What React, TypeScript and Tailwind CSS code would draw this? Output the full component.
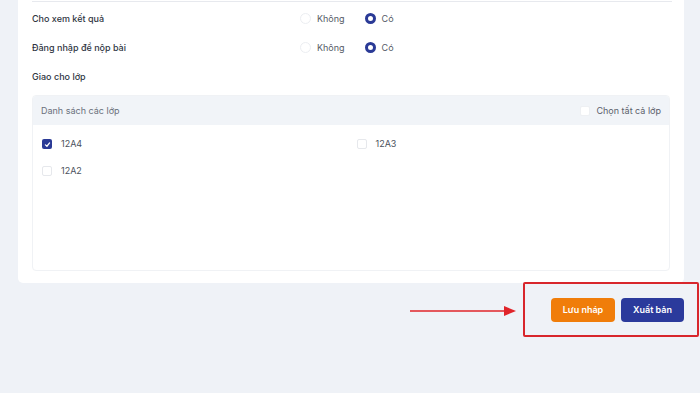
import React from "react";

function Radio({ checked, label }: { checked?: boolean; label: string }) {
  return (
    <label className="flex items-center gap-[6px]">
      {checked ? (
        <span className="w-[11px] h-[11px] rounded-full border-[3px] border-[#2a3a96] bg-white" />
      ) : (
        <span className="w-[11px] h-[11px] rounded-full border border-[#eceef2] bg-white" />
      )}
      <span className="text-[9px] text-[#555b66]">{label}</span>
    </label>
  );
}

function Check({ checked, label }: { checked?: boolean; label: string }) {
  return (
    <label className="flex items-center gap-[9px]">
      {checked ? (
        <span className="w-[10px] h-[10px] rounded-[2px] bg-[#2a3a96] flex items-center justify-center">
          <svg width="7" height="7" viewBox="0 0 10 10">
            <path d="M2 5.5 L4.2 7.5 L8 2.8" fill="none" stroke="white" strokeWidth="1.8" strokeLinecap="round" strokeLinejoin="round" />
          </svg>
        </span>
      ) : (
        <span className="w-[10px] h-[10px] rounded-[2px] border border-[#e6e8ec] bg-white" />
      )}
      <span className="text-[9px] text-[#4b515c]">{label}</span>
    </label>
  );
}

function OptionRow({ label }: { label: string }) {
  return (
    <div className="flex items-center h-[29px]">
      <span className="w-[266px] text-[9px] font-medium text-[#2f3542]">{label}</span>
      <div className="flex items-center gap-[20px] pl-[2px]">
        <Radio label="Không" />
        <Radio checked label="Có" />
      </div>
    </div>
  );
}

export default function App() {
  return (
    <div
      className="w-[700px] h-[393px] bg-[#eff2f7] overflow-hidden relative"
      style={{ fontFamily: "Inter, 'Noto Sans', sans-serif" }}
    >
      <div className="ml-[18px] w-[666px] h-[283px] bg-white rounded-b-[5px] px-[14px]">
        <div className="h-[2px] border-b border-[#e7e9ee] -mr-[2px]" />
        <div className="pt-[2px]">
          <OptionRow label="Cho xem kết quả" />
          <OptionRow label="Đăng nhập để nộp bài" />
          <div className="h-[30px] flex items-center text-[9px] font-medium text-[#2f3542]">Giao cho lớp</div>
        </div>
        <div className="mt-[3px] w-[638px] h-[176px] border border-[#f0f2f5] rounded-[4px] overflow-hidden">
          <div className="h-[29px] bg-[#f1f4f8] flex items-center justify-between pl-[8px] pr-[8px]">
            <span className="text-[9px] text-[#6b717c]">Danh sách các lớp</span>
            <label className="flex items-center gap-[6px]">
              <span className="w-[10px] h-[10px] rounded-[2px] bg-white border border-[#eef0f3]" />
              <span className="text-[9px] text-[#5b616b]">Chọn tất cả lớp</span>
            </label>
          </div>
          <div className="grid grid-cols-2 pl-[9px] pt-[10px] gap-y-[9px]">
            <div className="h-[18px] flex items-center"><Check checked label="12A4" /></div>
            <div className="h-[18px] flex items-center pl-[1px]"><Check label="12A3" /></div>
            <div className="h-[18px] flex items-center"><Check label="12A2" /></div>
          </div>
        </div>
      </div>

      <div className="absolute left-[410px] top-[304px]">
        <svg width="110" height="14" viewBox="0 0 110 14">
          <line x1="0" y1="7" x2="96" y2="7" stroke="#e0242a" strokeWidth="1.6" />
          <path d="M94 2 L106 7 L94 12 Z" fill="#e0242a" />
        </svg>
      </div>

      <div className="absolute left-[523px] top-[282px] w-[176px] h-[55px] border-2 border-[#d8262c] rounded-[2px] flex items-center justify-end pr-[13px] gap-[6px]">
        <button className="w-[64px] h-[24px] rounded-[4px] bg-[#f07d0a] text-white text-[9px] font-semibold">Lưu nháp</button>
        <button className="w-[63px] h-[24px] rounded-[4px] bg-[#2b3a9c] text-white text-[9px] font-semibold">Xuất bản</button>
      </div>
    </div>
  );
}
